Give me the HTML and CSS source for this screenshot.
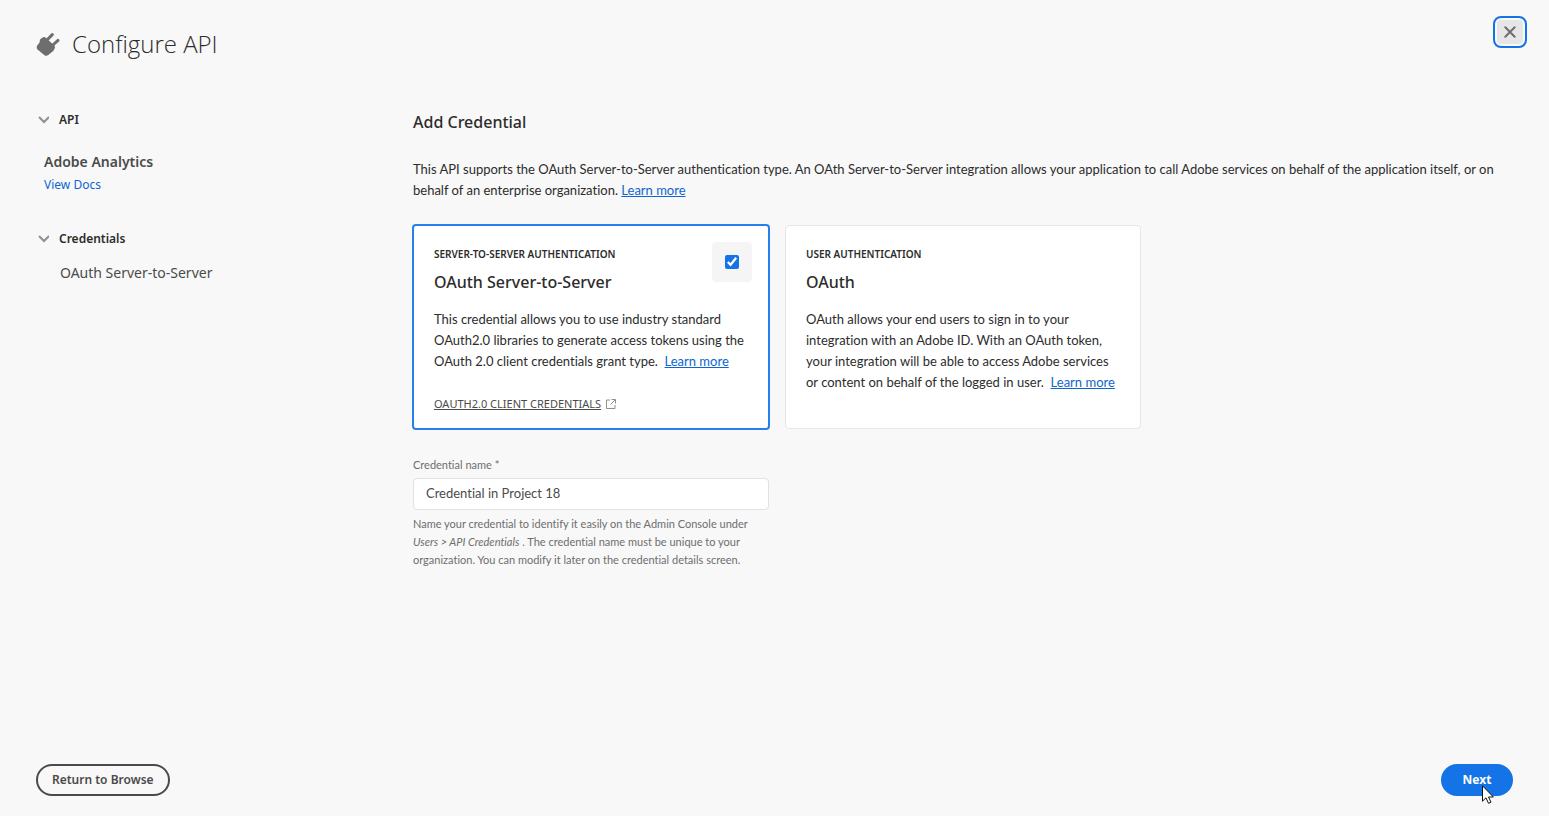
FILE: index.html
```html
<!DOCTYPE html>
<html lang="en">
<head>
<meta charset="utf-8">
<title>Configure API</title>
<link rel="stylesheet" href="styles.css">
</head>
<body>
<header class="header">
  <div class="brand">
    <svg class="plug" viewBox="0 0 24 24" aria-hidden="true">
      <path d="M4 7.500 7 5.200Q8.500 4.500 9.800 5.800L18.300 13.500Q19.500 15 18.700 16.300L17.500 18.700 12.300 23Q10.500 24.500 8.500 23.300L1.500 17.500Q0 15.500 1.200 13.400L3.500 10.500Z"/>
      <path class="plug-line" d="M10.500 8.500 16.300 2.600M15.800 14 22 8.400"/>
    </svg>
    <h1 class="title">Configure API</h1>
  </div>
  <button class="close" type="button" aria-label="Close">
    <svg viewBox="0 0 12 12" aria-hidden="true"><path d="M1.300 1.300 10.700 10.700M10.700 1.300 1.300 10.700"/></svg>
  </button>
</header>
<div class="body">
  <nav class="sidebar">
    <section class="group">
      <h2 class="group-title"><svg class="chevron" viewBox="0 0 12 8" aria-hidden="true"><path d="M2 1 7 6 12 1"/></svg>API</h2>
      <p class="product">Adobe Analytics</p>
      <a class="docs" href="#">View Docs</a>
    </section>
    <section class="group">
      <h2 class="group-title"><svg class="chevron" viewBox="0 0 12 8" aria-hidden="true"><path d="M2 1 7 6 12 1"/></svg>Credentials</h2>
      <p class="credential">OAuth Server-to-Server</p>
    </section>
  </nav>
  <main class="main">
    <h2 class="heading">Add Credential</h2>
    <p class="text intro">This API supports the OAuth Server-to-Server authentication type. An OAth Server-to-Server integration allows your application to call Adobe services on behalf of the application itself, or on behalf of an enterprise organization. <a href="#">Learn more</a></p>
    <div class="cards">
      <article class="card selected">
        <label class="check"><input type="checkbox" checked aria-label="OAuth Server-to-Server"></label>
        <p class="kind">SERVER-TO-SERVER AUTHENTICATION</p>
        <h3 class="heading">OAuth Server-to-Server</h3>
        <p class="text">This credential allows you to use industry standard OAuth2.0 libraries to generate access tokens using the OAuth 2.0 client credentials grant type. &nbsp;<a href="#">Learn more</a></p>
        <a class="external" href="#"><span>OAUTH2.0 CLIENT CREDENTIALS</span><svg viewBox="0 0 10 10" aria-hidden="true"><path d="M4 1H.5V9.500H9V6M5.500 .5H9.500V4.500M9.300 .7 4.500 5.500"/></svg></a>
      </article>
      <article class="card">
        <p class="kind">USER AUTHENTICATION</p>
        <h3 class="heading">OAuth</h3>
        <p class="text">OAuth allows your end users to sign in to your integration with an Adobe ID. With an OAuth token, your integration will be able to access Adobe services or content on behalf of the logged in user. &nbsp;<a href="#">Learn more</a></p>
      </article>
    </div>
    <div class="field">
      <label class="label" for="name">Credential name *</label>
      <input class="input" id="name" type="text" value="Credential in Project 18">
      <p class="help">Name your credential to identify it easily on the Admin Console under <em>Users &gt; API Credentials</em> . The credential name must be unique to your organization. You can modify it later on the credential details screen.</p>
    </div>
  </main>
</div>
<footer class="footer">
  <button class="button" type="button">Return to Browse</button>
  <button class="button primary" type="button">Next
    <svg class="cursor" viewBox="0 0 12 19" aria-hidden="true"><path d="M.5 .8V16.200L4 12.800 6.500 18.300 9 17.200 6.500 12H11.400Z"/></svg>
  </button>
</footer>
</body>
</html>
```

FILE: styles.css
```css
* { box-sizing: border-box; }
body {
  margin: 0;
  min-height: 100vh;
  display: flex;
  flex-direction: column;
  background: #f8f8f8;
  color: #2c2c2c;
  font-family: "Noto Sans", "Open Sans", sans-serif;
  font-size: 13px;
  line-height: 21px;
}
h1, h2, h3, p { margin: 0; }
a { color: #0d66d0; }
button { font: inherit; cursor: pointer; }
.header {
  display: flex;
  justify-content: space-between;
  align-items: flex-start;
  padding: 16px 22px 0 36px;
}
.brand { display: flex; align-items: center; gap: 12px; padding-top: 12px; }
.plug { width: 24px; height: 24px; fill: #6e6e6e; }
.plug-line { stroke: #6e6e6e; stroke-width: 3; stroke-linecap: round; }
.title { font: 300 24px/32px "Open Sans", "Noto Sans", sans-serif; }
.close {
  width: 34px;
  height: 32px;
  display: grid;
  place-items: center;
  padding: 0;
  border: 2px solid #1473e6;
  border-radius: 8px;
  background: #e6e6e6;
  box-shadow: inset 0 0 0 2px #f8f8f8;
}
.close svg { width: 12px; height: 12px; stroke: #6e6e6e; stroke-width: 2; stroke-linecap: round; }
.body {
  flex: 1;
  display: grid;
  grid-template-columns: 340px minmax(0, 1fr);
  gap: 36px;
  padding: 50px 36px 0 37px;
}
.sidebar { color: #4b4b4b; }
.group { margin-bottom: 34px; }
.group-title {
  display: flex;
  align-items: center;
  gap: 10px;
  color: #2c2c2c;
  font-size: 12px;
  font-weight: 600;
  line-height: 20px;
}
.chevron { width: 12px; height: 8px; fill: none; stroke: #909090; stroke-width: 2; }
.product { padding: 21px 0 0 7px; font-size: 14px; font-weight: 600; }
.docs { display: block; padding: 2px 0 0 7px; font-size: 12px; text-decoration: none; }
.credential { padding: 13px 0 0 23px; font-size: 14px; }
.text, .field { font-family: Lato, "Noto Sans", sans-serif; font-variant-ligatures: none; }
.heading { font-size: 16px; font-weight: 500; line-height: 24px; }
.intro { padding: 25px 0 23px; }
.cards { display: grid; grid-template-columns: 358px 358px; gap: 14px; margin-left: -1px; }
.card {
  position: relative;
  margin: 1px;
  padding: 18px 20px 14px;
  border: 1px solid #e6e6e6;
  border-radius: 4px;
  background: #fff;
}
.selected { margin: 0; border: 2px solid #2680eb; }
.check {
  position: absolute;
  top: 16px;
  right: 16px;
  display: grid;
  place-items: center;
  width: 40px;
  height: 40px;
  border-radius: 4px;
  background: #f5f5f5;
}
.check input { width: 14px; height: 14px; margin: 0; accent-color: #1473e6; }
.kind { font-size: 10px; font-weight: 600; line-height: 20px; }
.card .heading { padding-top: 6px; }
.card .text { padding-top: 15px; }
.external {
  display: flex;
  align-items: center;
  gap: 5px;
  padding-top: 21px;
  color: #4b4b4b;
  font-size: 11px;
}
.external svg { width: 10px; height: 10px; fill: none; stroke: #909090; }
.field { width: 356px; padding-top: 26px; color: #6e6e6e; font-size: 11px; line-height: 18px; }
.label { display: block; padding-bottom: 4px; }
.input {
  display: block;
  width: 100%;
  height: 32px;
  padding: 0 12px 2px;
  border: 1px solid #e1e1e1;
  border-radius: 4px;
  background: #fff;
  color: #4b4b4b;
  font: inherit;
  font-size: 13px;
}
.help { padding-top: 5px; }
.footer { display: flex; justify-content: space-between; padding: 0 36px 20px; }
.button {
  position: relative;
  height: 32px;
  padding: 0 14px 2px;
  border: 2px solid #4b4b4b;
  border-radius: 16px;
  background: transparent;
  color: #4b4b4b;
  font-size: 12px;
  font-weight: 600;
}
.primary { min-width: 72px; border-color: #1473e6; background: #1473e6; color: #fff; font-weight: 700; }
.cursor { position: absolute; left: 39px; top: 19px; width: 12px; height: 19px; fill: #fff; stroke: #111; }
```
